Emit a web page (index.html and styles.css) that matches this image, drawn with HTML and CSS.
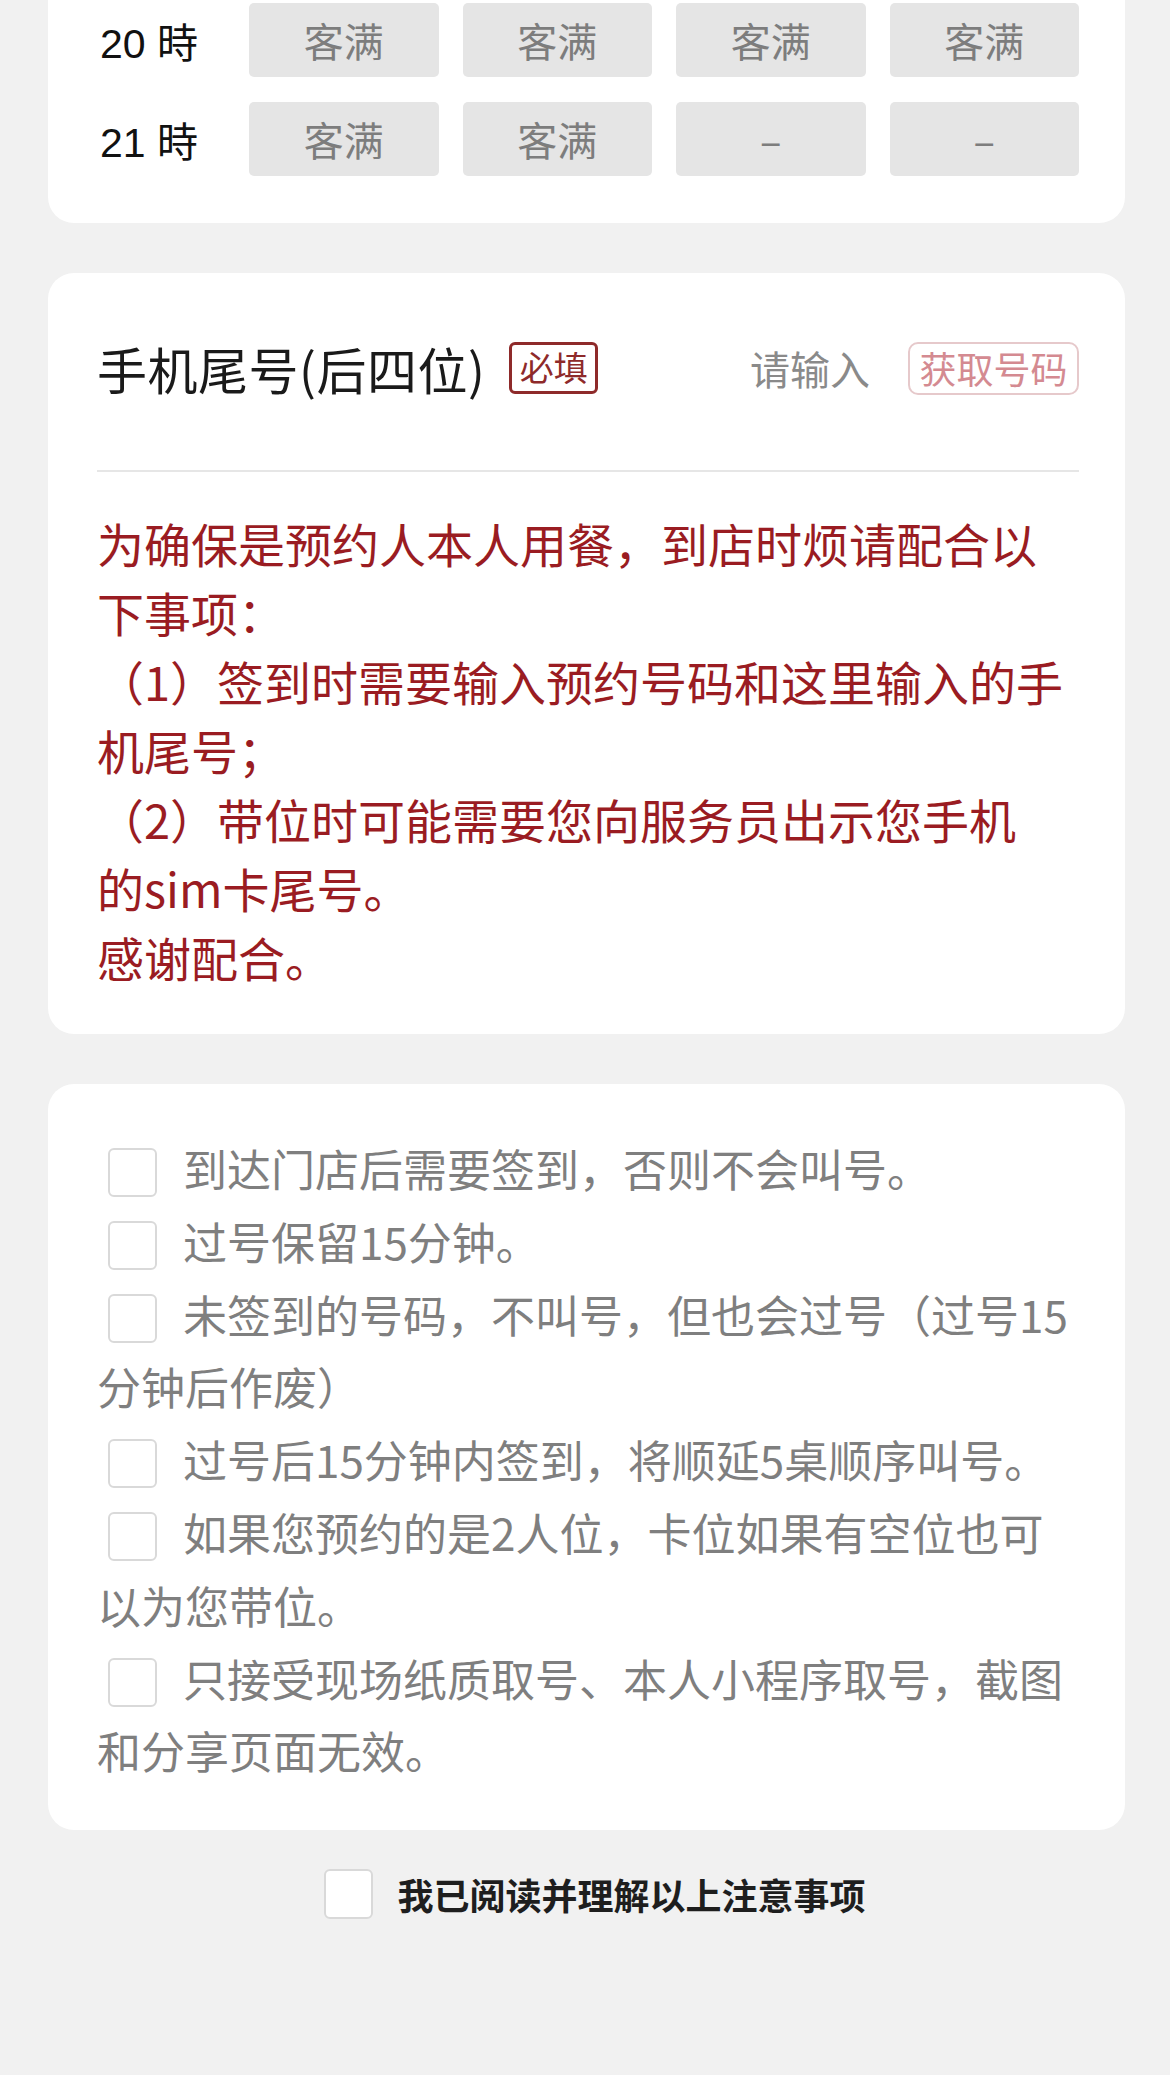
FILE: index.html
```html
<!DOCTYPE html>
<html lang="zh-CN">
<head>
    <meta charset="UTF-8">
    <meta name="viewport" content="width=device-width, initial-scale=1.0">
    <title>预约取号</title>
    <link rel="stylesheet" href="styles.css">
</head>
<body>
    <div class="page">
        <!-- time slots (scrolled, top cut off) -->
        <div class="card card-slots">
            <div class="slot-row">
                <div class="slot-hour">20 時</div>
                <div class="slot-list">
                    <div class="slot">客满</div>
                    <div class="slot">客满</div>
                    <div class="slot">客满</div>
                    <div class="slot">客满</div>
                </div>
            </div>
            <div class="slot-row">
                <div class="slot-hour">21 時</div>
                <div class="slot-list">
                    <div class="slot">客满</div>
                    <div class="slot">客满</div>
                    <div class="slot">–</div>
                    <div class="slot">–</div>
                </div>
            </div>
        </div>

        <div class="card card-phone">
            <div class="field-row">
                <div class="field-label">手机尾号(后四位)</div>
                <span class="required-tag">必填</span>
                <input class="field-input" type="text" placeholder="请输入">
                <button class="get-btn">获取号码</button>
            </div>
            <div class="divider"></div>
            <p class="notice">
                为确保是预约人本人用餐，到店时烦请配合以下事项：<br>
                （1）签到时需要输入预约号码和这里输入的手机尾号；<br>
                （2）带位时可能需要您向服务员出示您手机<span class="keep">的sim卡尾号。</span><br>
                感谢配合。
            </p>
        </div>

        <div class="card card-rules">
            <label class="rule"><span class="check"></span>到达门店后需要签到，否则不会叫号。</label>
            <label class="rule"><span class="check"></span>过号保留15分钟。</label>
            <label class="rule"><span class="check"></span>未签到的号码，不叫号，但也会过号（过号15分钟后作废）</label>
            <label class="rule"><span class="check"></span>过号后15分钟内签到，将顺延5桌顺序叫号。</label>
            <label class="rule"><span class="check"></span>如果您预约的是2人位，卡位如果有空位也可以为您带位。</label>
            <label class="rule"><span class="check"></span>只接受现场纸质取号、本人小程序取号，截图和分享页面无效。</label>
        </div>

        <label class="agree">
            <span class="check check-white"></span>
            <span class="agree-text">我已阅读并理解以上注意事项</span>
        </label>
    </div>
</body>
</html>
```

FILE: styles.css
```css
* {
    margin: 0;
    padding: 0;
    box-sizing: border-box;
}

body {
    font-family: "Noto Sans CJK SC", "Noto Sans", sans-serif;
    background: #f1f1f1;
    min-height: 100vh;
}

.page {
    padding: 0 45px 0 48px;
}

.card {
    background: white;
    border-radius: 26px;
    padding: 48px 46px 43px 49px;
    margin-bottom: 50px;
}

/* time slots */
.card-slots {
    border-radius: 0 0 26px 26px;
    padding-top: 3px;
    padding-bottom: 47px;
}

.slot-row {
    display: flex;
    align-items: center;
    margin-bottom: 25px;
}

.slot-row:last-child {
    margin-bottom: 0;
}

.slot-hour {
    width: 104px;
    text-align: center;
    font-family: "Liberation Sans", "Noto Sans CJK SC", sans-serif;
    font-size: 41px;
    color: #111;
}

.slot-list {
    flex: 1;
    margin-left: 48px;
    display: grid;
    grid-template-columns: repeat(4, 1fr);
    gap: 24px;
}

.slot {
    height: 74px;
    background: #e5e5e5;
    border-radius: 5px;
    display: flex;
    align-items: center;
    justify-content: center;
    font-size: 40px;
    color: #7d7d7d;
}

/* phone field */
.card-phone {
    padding-top: 55px;
}

.field-row {
    display: flex;
    align-items: center;
    height: 80px;
}

.field-label {
    font-size: 50px;
    color: #1a1a1a;
    letter-spacing: 0.5px;
}

.required-tag {
    margin-left: 24px;
    width: 89px;
    height: 52px;
    border: 3px solid #8e2a2a;
    border-radius: 6px;
    color: #8e2a2a;
    font-size: 34px;
    line-height: 44px;
    text-align: center;
}

.field-input {
    flex: 1;
    min-width: 0;
    border: none;
    outline: none;
    background: none;
    font-family: inherit;
    font-size: 40px;
    text-align: right;
    margin-right: 38px;
}

.field-input::placeholder {
    color: #8a8a8a;
}

.get-btn {
    width: 171px;
    height: 53px;
    background: white;
    border: 2px solid #e6c9cb;
    border-radius: 10px;
    color: #d48a91;
    font-family: inherit;
    font-size: 37px;
    line-height: 1;
}

.divider {
    height: 2px;
    background: #e6e6e6;
    margin: 62px 0 36px;
}

.notice {
    font-size: 47px;
    line-height: 69px;
    color: #9a1c22;
}

.keep {
    white-space: nowrap;
}

/* rules */
.card-rules {
    padding-top: 48px;
    padding-bottom: 43px;
}

.rule {
    display: block;
    font-size: 44px;
    line-height: 72.8px;
    color: #7f7f7f;
}

.check {
    display: inline-block;
    width: 49px;
    height: 49px;
    border: 2px solid #d9d9d9;
    border-radius: 6px;
    vertical-align: -10px;
    margin: 0 26px 0 11px;
    background: white;
}

/* agreement */
.agree {
    display: flex;
    align-items: center;
    justify-content: center;
    margin-top: -12px;
    padding-left: 17px;
}

.check-white {
    margin: 0 24px 0 0;
    height: 50px;
}

.agree-text {
    font-size: 36px;
    font-weight: bold;
    color: #1e1e1e;
}
```
